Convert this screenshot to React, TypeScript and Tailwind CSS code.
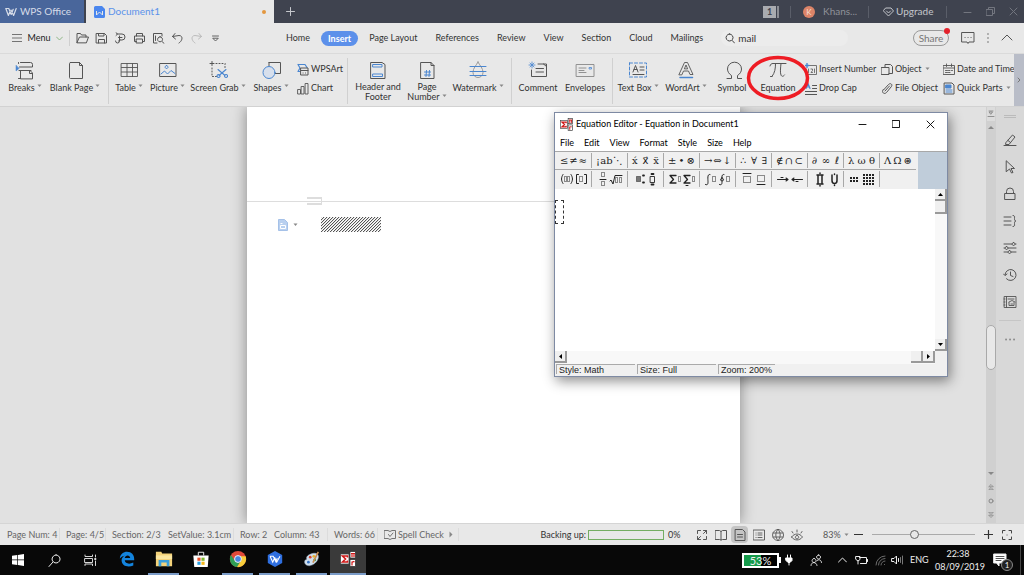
import type { ReactNode } from "react";

const BLUE = "#4a86d0";

function Svg({ w = 20, h = 20, children, className = "" }: { w?: number; h?: number; children: ReactNode; className?: string }) {
  return (
    <svg
      width={w}
      height={h}
      viewBox={`0 0 ${w} ${h}`}
      fill="none"
      stroke="currentColor"
      strokeLinecap="round"
      strokeLinejoin="round"
      className={`shrink-0 ${className}`}
      aria-hidden="true"
    >
      {children}
    </svg>
  );
}

function Caret({ className = "" }: { className?: string }) {
  return (
    <Svg w={5} h={4} className={className}>
      <path d="M.5 .5h4L2.500 3z" fill="#888" stroke="none" />
    </Svg>
  );
}

function Divider({ className = "h-3" }: { className?: string }) {
  return <span className={`w-px shrink-0 ${className}`} />;
}

function Equals({ size }: { size: number }) {
  return (
    <svg width={size} height={size} viewBox="0 0 16 16" className="shrink-0" aria-hidden="true">
      <rect x=".5" y="3" width="8.500" height="10" fill="#fff" stroke="#444" strokeWidth=".8" />
      <rect x="10" y=".5" width="5.500" height="6.500" fill="#fff" stroke="#333" strokeWidth=".8" />
      <rect x="10" y="8.500" width="5.500" height="7" fill="#fff" stroke="#333" strokeWidth=".8" />
      <path d="M7.500 6.500V5H2.500l3 3-3 3h5V9.500" fill="none" stroke="#d01818" strokeWidth="1.600" />
      <path d="M11 2.500h4M12 2.500v3.500M14 2.500v3.500M12 10.500v4M12 11.500c1-1 2-1 2.500-.4" fill="none" stroke="#d01818" strokeWidth="1.200" />
    </svg>
  );
}

/* ---------- title bar ---------- */

function TitleBar() {
  return (
    <header className="flex h-[23px] shrink-0 items-center bg-[#3f434f] text-[10px] text-[#b9bbc0]">
      <button className="flex h-full w-[84px] shrink-0 items-center gap-[3px] bg-[#49669b] pl-[5px] text-[#d6dce8]">
        <Svg w={12} h={10}>
          <path d="M.8 1.500h3l2.400 6 2-5.200M11.200 1.500 8.600 8.500 6 3M.8 1.500 3.400 8.500 5.200 4" strokeWidth="1.200" />
        </Svg>
        WPS Office
      </button>
      <div className="ml-[2px] flex h-full w-[188px] shrink-0 items-center bg-[#e8e8e8] pl-2 pr-2 text-[#5b92ea]">
        <svg width="11" height="12" viewBox="0 0 11 12" aria-hidden="true">
          <path d="M1.500 0H8l3 3v7.500A1.500 1.500 0 0 1 9.500 12h-8A1.500 1.500 0 0 1 0 10.500v-9A1.500 1.500 0 0 1 1.500 0z" fill="#4a86ee" />
          <path d="M2.500 5v4l3-3 3 3V5" fill="none" stroke="#e8e8e8" />
        </svg>
        <span className="ml-[3px]">Document1</span>
        <span className="ml-auto size-1 rounded-full bg-[#e3973f]" />
      </div>
      <button aria-label="New tab" className="ml-3 text-[#c5c7cc]">
        <Svg w={9} h={9}><path d="M4.500.500v8M.5 4.500h8" /></Svg>
      </button>
      <div className="ml-auto flex shrink-0 items-center">
        <span className="flex h-3 w-[13px] items-center justify-center bg-[#a9abb0] text-[9px] font-bold text-[#3f434f]">1</span>
        <span className="ml-px h-3 w-[2px] bg-[#8b8d94]" />
        <Divider className="ml-[11px] h-3 bg-[#5a5e69]" />
        <span className="ml-3 flex size-3 items-center justify-center rounded-full bg-[#dc8468] text-[8px] text-[#f3ddd4]">K</span>
        <button className="ml-2 w-[45px] text-left text-[#8f9299]">Khans...</button>
        <Divider className="h-3 bg-[#5a5e69]" />
        <button className="ml-[14px] flex w-[63px] items-center gap-[2px] text-[#c5c7cc]">
          <Svg w={11} h={10}><path d="M3 1h5l2.500 3-5 5-5-5zM3.500 4l2 2 2-2" /></Svg>
          Upgrade
        </button>
        <Divider className="h-3 bg-[#5a5e69]" />
        <button aria-label="Minimize" className="ml-4 text-[#73767f]"><Svg w={9} h={9}><path d="M1 5.500h7" /></Svg></button>
        <button aria-label="Restore" className="ml-[14px] text-[#73767f]"><Svg w={9} h={9}><path d="M.5 2.500h6v6h-6zM2.500 2.500v-2h6v6h-2" /></Svg></button>
        <button aria-label="Close" className="ml-[14px] mr-[6px] text-[#73767f]"><Svg w={9} h={9}><path d="m1 1 7 7M8 1 1 8" /></Svg></button>
      </div>
    </header>
  );
}

/* ---------- menu bar ---------- */

const QUICK_ACTIONS: { name: string; icon: ReactNode; dim?: boolean }[] = [
  { name: "Open", icon: <path d="M1 10.500v-9h3.500l1 1.500h4.500v2M1 10.500 3.500 5H12.500l-2 5.500z" /> },
  { name: "Save", icon: <path d="M1.500 1.500h8l2 2v7.500h-10zM3.500 1.500V4h5.500V1.500M3.500 11V7.500h6V11" /> },
  { name: "Output as PDF", icon: <path d="M3 2h5a2.500 2.500 0 0 1 0 6H6M5.500 4v5a2 2 0 0 1-4 0M2 3.500 3.500 2 2 .700M4.500 5.500h3.500M6 8l-1.500 1" /> },
  { name: "Print", icon: <path d="M3.500 4V1.500h6V4M3.500 9.500h-2V4h10v5.500h-2M3.500 7h6v4h-6z" /> },
  { name: "Print Preview", icon: <path d="M5 11H1.500v-9.500H10V4M10 9.500l2 1.800M8 4.800a2.500 2.500 0 1 0 .1 0zM3.500 4v4.500" /> },
  { name: "Undo", icon: <path d="M4 1.500 1.500 4.500l3 2.500M1.500 4.500 8 3.500c4 0 4 5 0 7.500" /> },
  { name: "Redo", icon: <path d="m9 1.500 2.500 3-3 2.500M11.500 4.500 5 3.500c-4 0-4 5 0 7.500" />, dim: true },
  { name: "Customize", icon: <path d="M3.500 4h6M4 6.500l2.500 2.500L9 6.500z" strokeWidth=".9" /> },
];

const TABS = ["Home", "Insert", "Page Layout", "References", "Review", "View", "Section", "Cloud", "Mailings"];

function MenuBar() {
  return (
    <div className="flex h-[31px] shrink-0 items-center border-b border-[#dadada] bg-[#e8e8e8] text-[#333]">
      <div className="flex w-[286px] shrink-0 items-center">
        <button className="ml-3 flex items-center gap-[5px] text-[#222]">
          <Svg w={10} h={8} className="text-[#666]"><path d="M0 .5h10M0 4h10M0 7.500h10" strokeWidth=".9" /></Svg>
          <span className="w-[24px]">Menu</span>
          <Svg w={7} h={5} className="text-[#84b07c]"><path d="M.5 1l3 3 3-3" strokeWidth=".9" /></Svg>
        </button>
        <Divider className="ml-[6px] h-4 bg-[#cfcfcf]" />
        <div className="ml-[3px] flex">
          {QUICK_ACTIONS.map(({ name, icon, dim }) => (
            <button key={name} aria-label={name} className={`flex w-[19px] justify-center ${dim ? "text-[#bbb]" : "text-[#555]"}`}>
              <Svg w={13} h={12}>{icon}</Svg>
            </button>
          ))}
        </div>
      </div>
      <nav className="flex shrink-0 items-center gap-[18px]">
        {TABS.map((tab) => (
          <button
            key={tab}
            className={tab === "Insert" ? "-mx-[7px] h-[15px] rounded-full bg-[#5c90ea] px-[7px] font-bold leading-[15px] text-white" : ""}
          >
            {tab}
          </button>
        ))}
      </nav>
      <label className="ml-[18px] flex h-4 w-[127px] items-center gap-[3px] rounded-full bg-[#ececec] pl-1">
        <Svg w={10} h={11} className="text-[#444]"><path d="M4.500 1a3.500 3.500 0 1 0 .1 0zM7.200 7.500l2.300 2.500" /></Svg>
        <input aria-label="Search" defaultValue="mail" className="w-full min-w-0 bg-transparent text-[10px] text-[#333] outline-none" />
      </label>
      <div className="ml-auto flex shrink-0 items-center text-[#555]">
        <button className="relative h-4 w-9 rounded-full border border-[#999] text-[10px] leading-[13px] text-[#777]">
          Share
          <span className="absolute -right-[2px] -top-[3px] size-[6px] rounded-full bg-[#e3222c]" />
        </button>
        <button aria-label="Feedback" className="ml-3"><Svg w={14} h={14}><path d="M1 1.500h12v9.500H8l-1 1.500L6 11H1zM4 6.500h.1M7 6.500h.1M10 6.500h.1" /></Svg></button>
        <button aria-label="More" className="ml-3"><Svg w={2} h={12}><path d="M1 2v.1M1 6v.1M1 10v.1" strokeWidth="1.400" /></Svg></button>
        <button aria-label="Collapse ribbon" className="ml-3 mr-[11px]"><Svg w={12} h={8}><path d="m1 6 5-5 5 5" /></Svg></button>
      </div>
    </div>
  );
}

/* ---------- ribbon ---------- */

type Tool = { label: string; width: string; icon: ReactNode; caret?: boolean; second?: string };

function RibbonButton({ label, width, icon, caret, second }: Tool) {
  return (
    <button className={`flex h-full shrink-0 flex-col items-center pt-[6px] ${width}`}>
      <Svg className="text-[#555]">{icon}</Svg>
      <span className={`mt-[2px] flex whitespace-nowrap ${second ? "leading-[10px]" : "leading-3"}`}>
        {label}
        {caret && !second && <Caret className="ml-[2px] mt-[2px]" />}
      </span>
      {second && (
        <span className="flex whitespace-nowrap leading-[10px]">
          {second}
          {caret && <Caret className="ml-[2px] mt-[2px]" />}
        </span>
      )}
    </button>
  );
}

const PAGE_TOOLS: Tool[] = [
  { label: "Breaks", width: "w-[50px]", caret: true, icon: <><path d="M5.500 2.500h10a2 2 0 0 1 2 2V7H4.500M5.500 18.500V10.500H15l2.500 2.500v5.500zM4 10.500h12M14.500 10.500v3h3M3.500 2.500v1M3.500 18.500h2" /><path d="M1 5.500v5.500l3-2.500z" fill={BLUE} stroke={BLUE} strokeWidth=".5" /></> },
  { label: "Blank Page", width: "w-[50px]", caret: true, icon: <path d="M5.500 2.500h9l3 3v13h-12a1 1 0 0 1-1-1v-14a1 1 0 0 1 1-1zM14.500 2.500v3h3" /> },
];
const OBJECT_TOOLS: Tool[] = [
  { label: "Table", width: "w-[40px]", caret: true, icon: <path d="M2.500 3.500h16v13h-16zM2.500 7.500h16M2.500 12h16M8 3.500v13M13.500 3.500v13" strokeWidth=".9" /> },
  { label: "Picture", width: "w-[37px]", caret: true, icon: <><rect x="2" y="3.500" width="16" height="13" /><path d="m3 14 3.500-3 3 3 3.500-3.500 4 3M8.500 5.500a1.500 1.500 0 1 0 .1 0z" stroke={BLUE} /></> },
  { label: "Screen Grab", width: "w-[64px]", caret: true, icon: <><path d="M2 3.500h4M4 1.500v4" /><path d="M8 3.500h9v4M4 8v8.500h5" strokeDasharray="1 2" /><path d="m10 9.500 7 6M18 9.500l-7 6M10.500 14.500a1.500 1.500 0 1 0 .1 0zM18 14.500a1.500 1.500 0 1 0 .1 0z" stroke={BLUE} strokeWidth="1.100" /></> },
  { label: "Shapes", width: "w-[42px]", caret: true, icon: <><path d="M8 2.500H19.500v11H14M8 2.500V6" /><circle cx="8" cy="12.500" r="6" fill="#d7dfec" stroke={BLUE} /></> },
];
const HEADER_TOOLS: Tool[] = [
  { label: "Header and", second: "Footer", width: "w-[52px]", icon: <><path d="M3 2.500h11l3 2v14H3z" /><path d="M5 4.500h9v2.500H5zM5 14h9.500v2.500H5z" stroke={BLUE} /></> },
  { label: "Page", second: "Number", caret: true, width: "w-[46px]", icon: <><path d="M4 2.500h10l3 3v13H4zM14 2.500v3h3" /><path d="M7.500 12h6M7.500 15h6M9.500 10.500l-.5 6M12.500 10.500l-.5 6" stroke={BLUE} /></> },
  { label: "Watermark", caret: true, width: "w-[56px]", icon: <><path d="M10 2c2 4 5 6 5 10.500a5 5 0 0 1-10 0C5 8 8 6 10 2z" stroke="#999" /><path d="M2 6.500h16M2 11.500h16M2 15.500h16" stroke={BLUE} /></> },
];
const COMMENT_TOOLS: Tool[] = [
  { label: "Comment", width: "w-[48px]", icon: <><path d="M10 4h8.500v12.500h-15V10M8 8.500h7.500M8 12h7.500M15.500 4l3 2.500" /><path d="M4 2v6M1 5h6M2 3l4 4M6 3 2 7" stroke={BLUE} strokeWidth=".8" /></> },
  { label: "Envelopes", width: "w-[46px]", icon: <><path d="M1.500 4.500h17.500v12H1.500zM4 8h7M4 10.500h5M4 12.500h7" stroke="#888" strokeWidth=".9" /><path d="M14.500 7.500h2v1.500h-2z" stroke={BLUE} strokeWidth=".8" /></> },
];
const TEXT_TOOLS: Tool[] = [
  { label: "Text Box", width: "w-[50px]", caret: true, icon: <><rect x="1.500" y="3" width="17" height="14" stroke={BLUE} strokeDasharray="3 2" /><path d="m5 12 2.500-6.500L10 12M6 9.500h3M12 7h4M12 10h4M5 14.500h11" /></> },
  { label: "WordArt", width: "w-[46px]", caret: true, icon: <><path d="M3 14.500 8.500 2.500h3l5.500 12h-3L12.500 11h-5L6 14.500zM8.500 8.500 10 5l1.500 3.500z" strokeWidth=".9" /><path d="M4 17.500h12.500" stroke={BLUE} strokeWidth="1.500" /></> },
  { label: "Symbol", width: "w-[46px]", icon: <path d="M5 18.500h4.500V15.500C7 14 5.500 11.500 5.500 9a7 6.800 0 0 1 14 0c0 2.500-1.500 5-4 6.500v3H20" /> },
];

function SmallTool({ label, icon, caret }: { label: string; icon: ReactNode; caret?: boolean }) {
  return (
    <button className="flex h-[14px] items-center gap-[2px] whitespace-nowrap">
      <Svg w={12} h={13} className="text-[#555]">{icon}</Svg>
      {label}
      {caret && <Caret className="ml-px" />}
    </button>
  );
}

function ToolColumn({ children, width }: { children: ReactNode; width: string }) {
  return <div className={`flex shrink-0 flex-col gap-[5px] pt-2 ${width}`}>{children}</div>;
}

function Ribbon() {
  const line = "mt-1 h-[46px] bg-[#d0d0d0]";
  return (
    <div className="flex h-[53px] shrink-0 border-b border-[#d2d2d2] bg-[#e8e8e8] text-[#333]">
      <div className="flex w-[108px] shrink-0">{PAGE_TOOLS.map((t) => <RibbonButton key={t.label} {...t} />)}</div>
      <Divider className={line} />
      <div className="flex shrink-0">
        {OBJECT_TOOLS.map((t) => <RibbonButton key={t.label} {...t} />)}
        <div className="pl-[5px]">
          <ToolColumn width="w-[50px]">
            <SmallTool label="WPSArt" icon={<><path d="M1 1.500h7l2 3M1 1.500 3 5l-2 3.500h2" stroke={BLUE} strokeWidth="1.200" /><path d="M4 5h7v7H4zM4 7.500h7M6 10h.1M8.500 10h.1" /></>} />
            <SmallTool label="Chart" icon={<path d="M1 7.500h2.500V12H1zM4.500 4.500H7V12H4.500zM8.500 1.500H11V12H8.500z" strokeWidth=".9" />} />
          </ToolColumn>
        </div>
      </div>
      <Divider className={line} />
      <div className="flex w-[163px] shrink-0 pl-1">{HEADER_TOOLS.map((t) => <RibbonButton key={t.label} {...t} />)}</div>
      <Divider className={line} />
      <div className="flex w-[100px] shrink-0 pl-[2px]">{COMMENT_TOOLS.map((t) => <RibbonButton key={t.label} {...t} />)}</div>
      <Divider className={line} />
      <div className="flex shrink-0">
        {TEXT_TOOLS.map((t) => <RibbonButton key={t.label} {...t} />)}
        <div className="relative z-10">
          <RibbonButton
            label="Equation"
            width="w-[46px]"
            icon={<path d="M2 6c.5-2 1.500-2.500 3-2.500h13M7.500 3.500c0 5-.5 9-3.500 13M13 3.500c-.5 5-1 9 0 11.500.8 2 2.500 1.500 3.500 0M2.500 16.500H4" />}
          />
          <svg width="64" height="46" viewBox="0 0 64 46" className="pointer-events-none absolute -left-[9px] top-px" aria-hidden="true">
            <ellipse cx="32" cy="23" rx="29.500" ry="20.500" fill="none" stroke="#ee1c24" strokeWidth="3.500" />
          </svg>
        </div>
      </div>
      <div className="flex pl-1">
        <ToolColumn width="w-[76px]">
          <SmallTool label="Insert Number" icon={<><path d="M4 2.500h7.500v9H1V6M3.500 6v3.500M6 6h1.500v1.500L6 9.500h1.500M9.500 6v3.500" strokeWidth=".8" /><path d="M2 .5v4M0 2.500h4" stroke={BLUE} strokeWidth="1.400" /></>} />
          <SmallTool label="Drop Cap" icon={<><path d="M7.500 3.500H12M7.500 6.500H12M0 9.500h12M0 12.500h12" /><path d="m1 6.500 2-5 2 5M2 5h2" stroke={BLUE} strokeWidth="1.200" /></>} />
        </ToolColumn>
        <ToolColumn width="w-[62px]">
          <SmallTool label="Object" caret icon={<path d="M4 4V1.500h5.500l2 2v7H8M.5 4.500H8v7H.5z" />} />
          <SmallTool label="File Object" icon={<path d="m2.500 8 5-5.500c2-2 4.500 0 2.800 2.200L5.500 10.500c-2.500 2.500-5.500-.5-3.300-3M4 9l4.500-5" />} />
        </ToolColumn>
        <ToolColumn width="w-[70px]">
          <SmallTool label="Date and Time" icon={<path d="M.5 2.500h11v9H.5zM.5 5h11M3.500 1v2.500M8.500 1v2.500M2.500 7.500h2M5.500 7.500h1.500M8.500 7.500h1M2.500 9.500h2M5.500 9.500h1.500" strokeWidth=".9" />} />
          <SmallTool label="Quick Parts" caret icon={<><path d="M1.500 1h7.500l2 2v9H1.500z" /><path d="M3 3h5v3H3z" fill={BLUE} stroke={BLUE} /><path d="M3 8h6M3 10h6" stroke={BLUE} /></>} />
        </ToolColumn>
      </div>
      <button aria-label="Scroll ribbon" className="ml-auto flex w-[10px] shrink-0 items-center justify-center bg-[#b9bdc8] text-[#777]">
        <Svg w={4} h={6}><path d="m1 1 2 2-2 2" /></Svg>
      </button>
    </div>
  );
}

/* ---------- equation editor ---------- */

const SYMBOLS = ["≤ ≠ ≈", "¡ ab ⋱", "x́ x⃗ ẍ", "± • ⊗", "→ ⇔ ↓", "∴ ∀ ∃", "∉ ∩ ⊂", "∂ ∞ ℓ", "λ ω θ", "Λ Ω ⊛"];

const slot = (x: number, y: number, w = 4, h = 5) => (
  <rect x={x + 0.5} y={y + 0.5} width={w} height={h} strokeDasharray="1 1" strokeWidth="1" strokeLinecap="butt" />
);

const TEMPLATES: { name: string; icon: ReactNode }[] = [
  { name: "Fences", icon: <><path d="M3 2.500c-2 3-2 6 0 9M11 2.500c2 3 2 6 0 9M18.500 2.500h-2v9h2M24.500 2.500h2v9h-2" />{slot(4, 4, 2)}{slot(7, 4, 2)}{slot(19, 4, 3)}</> },
  { name: "Fractions and radicals", icon: <>{slot(5, 0, 3, 4)}{slot(5, 9, 3, 4)}<path d="M4 7.500h6M14 9l1-1 2 4L19 3.500h7" />{slot(19, 5, 2)}{slot(23, 5, 2)}</> },
  { name: "Scripts", icon: <><rect x="4.500" y="4.500" width="4" height="5" fill="#777" strokeDasharray="1 1" strokeLinecap="butt" /><path d="M11 3.500h1M11 10.500h1M19.500 2h2M19.500 12.500h2" strokeWidth="1.800" /><rect x="18.500" y="4.500" width="4" height="6" strokeWidth=".9" /></> },
  { name: "Summations", icon: <><path d="M8 3.500H2l3.500 4L2 11h6M22 3.500h-6l3.500 4L16 11h6" strokeWidth="1.300" />{slot(10, 4, 2)}{slot(24, 4, 2)}<path d="M18 13.500h2" /></> },
  { name: "Integrals", icon: <><path d="M6 2.500c-3-1-2 5-2 7s0 4-2.500 3M20 2.500c-3-1-2 5-2 7s0 4-2.500 3M18 6a1.500 1.500 0 1 0 .1 0z" />{slot(8, 4, 3)}{slot(22, 4, 3)}</> },
  { name: "Bars", icon: <><path d="M3 1.500h8M17 12.500h8" />{slot(3, 4, 7, 6)}{slot(17, 3, 7, 6)}</> },
  { name: "Arrows", icon: <path d="M1.500 7.500H12M10 6l2 1.500L10 9M5 5.500h2M16 7.500h10.500M18 6l-2 1.500L18 9M20 9.500h2" strokeWidth="1.100" /> },
  { name: "Products", icon: <><path d="M5 3h6M6 3v8.500M10 3v8.500M5 12h6M20 3v5.500c0 4 5 4 5 0V3" strokeWidth="1.500" /><path d="M8 1v.5M8 14v-.5M22.500 2v.5M22.500 13v.5" strokeWidth="1.500" /></> },
  { name: "Matrices", icon: <><path d="M2 6h8M2 9h8" strokeWidth="2" strokeDasharray="2 1" strokeLinecap="butt" /><path d="M15 3h11M15 6h11M15 9h11M15 12h11" strokeWidth="2" strokeDasharray="2 1" strokeLinecap="butt" /></> },
];

function ScrollArrow({ name, d }: { name: string; d: string }) {
  return (
    <button aria-label={name} className="flex h-3 w-3 shrink-0 items-center justify-center border-b-2 border-r-2 border-[#9a9a9a] bg-[#f0f0f0] text-black">
      <Svg w={5} h={5}><path d={d} fill="currentColor" stroke="none" /></Svg>
    </button>
  );
}

function EquationEditor() {
  return (
    <section className="absolute left-[554px] top-[5px] flex h-[265px] w-[394px] flex-col border border-[#7e8aa3] bg-white text-black shadow-[2px_4px_12px_rgba(0,0,0,0.45)]">
      <div className="flex h-[22px] shrink-0 items-center pl-[5px] pr-3">
        <Equals size={13} />
        <span className="ml-[3px]">Equation Editor - Equation in Document1</span>
        <div className="ml-auto flex gap-[25px]">
          <button aria-label="Minimize editor"><Svg w={9} h={9}><path d="M1 4.500h7" strokeWidth=".9" /></Svg></button>
          <button aria-label="Maximize editor"><Svg w={9} h={9}><path d="M.5.500h7v7h-7z" strokeWidth=".9" /></Svg></button>
          <button aria-label="Close editor"><Svg w={9} h={9}><path d="m1 1 7 7M8 1 1 8" strokeWidth=".9" /></Svg></button>
        </div>
      </div>
      <nav className="flex h-4 shrink-0 items-center gap-[10px] pl-[5px]">
        {["File", "Edit", "View", "Format", "Style", "Size", "Help"].map((m) => <button key={m}>{m}</button>)}
      </nav>
      <div className="flex h-[38px] shrink-0 border-t border-[#a8a8a8] bg-[#c0cdda]">
        <div className="w-[363px] bg-[#f0f0f0] text-[#222]">
          <div className="mr-[2px] flex h-[18px] border-b border-[#a8a8a8] pl-[1px] pt-px">
            {SYMBOLS.map((s, i) => (
              <button
                key={s}
                className={`flex h-[15px] w-9 items-center justify-between px-1 font-['DejaVu_Serif','DejaVu_Sans',serif] text-[10px] leading-none ${i < SYMBOLS.length - 1 ? "border-r border-[#a8a8a8]" : ""}`}
              >
                {s.split(" ").map((c) => <span key={c}>{c}</span>)}
              </button>
            ))}
          </div>
          <div className="flex h-[18px] pl-[1px] pt-px">
            {TEMPLATES.map(({ name, icon }) => (
              <button key={name} aria-label={name} className="flex h-4 w-9 items-center justify-center border-r border-[#a8a8a8]">
                <Svg w={28} h={15}>{icon}</Svg>
              </button>
            ))}
          </div>
        </div>
      </div>
      <div className="flex min-h-0 flex-1">
        <div className="flex-1 pt-[11px]">
          <div className="h-6 w-[9px] border border-dashed border-[#333]" />
        </div>
        <div className="flex w-3 flex-col bg-[#f8f8f8]">
          <ScrollArrow name="Scroll up" d="M0 4h5L2.500 1z" />
          <span className="h-[13px] border-b-2 border-r-2 border-[#9a9a9a] bg-[#f0f0f0]" />
          <span className="flex-1" />
          <ScrollArrow name="Scroll down" d="M0 1h5L2.500 4z" />
        </div>
      </div>
      <div className="flex h-[13px] shrink-0 bg-[#f8f8f8]">
        <ScrollArrow name="Scroll left" d="M4 0v5L1 2.500z" />
        <span className="flex-1" />
        <span className="h-3 w-3 border-b-2 border-r-2 border-[#9a9a9a] bg-[#f0f0f0]" />
        <ScrollArrow name="Scroll right" d="M1 0v5l3-2.500z" />
        <span className="w-3 bg-[#f0f0f0]" />
      </div>
      <footer className="flex h-3 shrink-0 gap-[2px] bg-[#f0f0f0] pl-px font-['Liberation_Sans',Arial,sans-serif] leading-[10px] text-[#222]">
        <span className="h-[10px] w-[79px] border-l border-t border-[#aaa] pl-[2px]">Style: Math</span>
        <span className="h-[10px] w-[79px] border-l border-t border-[#aaa] pl-[2px]">Size: Full</span>
        <span className="h-[10px] w-[57px] border-l border-t border-[#aaa] pl-[2px]">Zoom: 200%</span>
      </footer>
    </section>
  );
}

/* ---------- document area ---------- */

const SIDE_TOOLS: { name: string; icon: ReactNode }[] = [
  { name: "Highlighter", icon: <path d="M1 12.500h12M3 9.500 9.500 2l2.500 2-6 7.500H3zM5 7.500l2.500 2" /> },
  { name: "Select", icon: <path d="m3.500 1 8 7.500H8l2 4-1.500.5-2-4-3 2.500z" /> },
  { name: "Protect", icon: <path d="M2 6.500h10v6H2zM3.500 6.500V4.500a3.500 3.500 0 0 1 7 0v2" /> },
  { name: "Styles", icon: <path d="M1 3h7M1 7h7M1 11h7M10 1.500c2 0 1.500 1 1.500 3S12 7 13 7c-1 0-1.500.5-1.500 2.500s.5 3-1.500 3" /> },
  { name: "Settings", icon: <path d="M1 3h8M12 3h1M1 7h1M5 7h8M1 11h4M8 11h5M10.500 1.500a1.500 1.500 0 1 0 .1 0zM3.500 5.500a1.500 1.500 0 1 0 .1 0zM6.500 9.500a1.500 1.500 0 1 0 .1 0z" /> },
  { name: "History", icon: <path d="M2 7a5.500 5.500 0 1 1 1.500 3.800M.5 6l1.500 1.500L4 6M7.500 4v3.500l2.500 1" /> },
  { name: "Templates", icon: <path d="M1.500 1.500H13v11H1.500zM3.500 1.500v11M1 4h1M1 7h1M1 10h1M5 4h6M6 7l3-1.500L12 7M6 7.500v3h5v-3M8 9h1.500" strokeWidth=".9" /> },
];

function SidePane() {
  return (
    <aside className="flex w-7 shrink-0 flex-col items-center bg-[#d8d8d8] pt-2 text-[#555]">
      <span className="mb-[15px] h-[3px] w-3 border-y border-[#bbb]" />
      <div className="flex flex-col gap-[13px]">
        {SIDE_TOOLS.map(({ name, icon }) => (
          <button key={name} aria-label={name}><Svg w={14} h={14}>{icon}</Svg></button>
        ))}
      </div>
      <span className="mt-[11px] h-px w-[22px] bg-[#c6c6c6]" />
      <button aria-label="More panes" className="mt-[17px] text-[#888]">
        <Svg w={12} h={3}><path d="M2 1.500h.1M6 1.500h.1M10 1.500h.1" strokeWidth="1.800" /></Svg>
      </button>
    </aside>
  );
}

function VerticalScroll() {
  return (
    <div className="flex w-[10px] shrink-0 flex-col items-center bg-[#d0d0d0] text-[#888]">
      <Svg w={8} h={14} className="bg-[#dcdcdc]"><path d="M2 4h4M2.500 5h3L4 7zM1 9.500h6" strokeWidth=".9" /></Svg>
      <Svg w={6} h={5} className="mt-1"><path d="M0 4h6L3 1z" fill="currentColor" stroke="none" /></Svg>
      <span className="mt-[195px] h-[45px] w-[10px] shrink-0 rounded-full border border-[#a9a9a9] bg-[#e8e8e8]" />
      <div className="mt-auto flex flex-col items-center gap-2 pb-[5px]">
        <Svg w={6} h={5}><path d="M0 1h6L3 4z" fill="currentColor" stroke="none" /></Svg>
        <Svg w={6} h={6}><path d="m1 2.500 2-2 2 2zM1 5.500l2-2 2 2z" strokeWidth=".8" /></Svg>
        <Svg w={6} h={6}><circle cx="3" cy="3" r="2" /></Svg>
        <Svg w={6} h={6}><path d="m1 .5 2 2 2-2zM1 3.500l2 2 2-2z" strokeWidth=".8" /></Svg>
      </div>
    </div>
  );
}

function Workspace() {
  return (
    <main className="relative flex min-h-0 flex-1 overflow-hidden bg-[#e1e1e1]">
      <div className="flex min-w-0 flex-1 justify-center">
        <div className="flex w-1/2 flex-col shadow-[0_0_14px_rgba(0,0,0,0.4)]">
          <article className="flex h-[94px] flex-col items-start justify-end bg-white">
            <span className="ml-[60px] h-1 w-[15px] border-r border-t-2 border-[#ddd]" />
          </article>
          <article className="flex-1 border-t border-[#ddd] bg-white">
            <span className="ml-[60px] block h-[3px] w-[15px] border-b-2 border-r border-[#ddd]" />
            <div className="ml-[31px] mt-3 flex items-center">
              <svg width="10" height="12" viewBox="0 0 10 12" aria-hidden="true">
                <path d="M.5.500h6l3 3v8h-9z" fill="#b9d0ef" stroke="#a5c1e8" />
                <path d="M2.500 4.500h2M2.500 6.500h5v3h-5z" fill="none" stroke="#fff" />
              </svg>
              <Caret className="ml-[5px]" />
              <svg width="60" height="15" className="ml-[23px]" shapeRendering="crispEdges" aria-hidden="true">
                <defs>
                  <pattern id="hatch" width="3" height="3" patternUnits="userSpaceOnUse">
                    <path d="M2 0h1v1H2zM1 1h1v1H1zM0 2h1v1H0z" fill="#555" />
                    <path d="M0 0h1v1H0zM2 1h1v1H2zM1 2h1v1H1z" fill="#ddd" />
                  </pattern>
                </defs>
                <rect width="60" height="15" fill="url(#hatch)" />
              </svg>
            </div>
          </article>
        </div>
      </div>
      <VerticalScroll />
      <SidePane />
      <EquationEditor />
    </main>
  );
}

/* ---------- status bar ---------- */

const VIEWS: { name: string; icon: ReactNode; active?: boolean }[] = [
  { name: "Full Screen", icon: <path d="M1.500 4.500v-3h3M7.500 1.500h3v3M10.500 7.500v3h-3M4.500 10.500h-3v-3M7.500 4.500l3-3M4.500 7.500l-3 3" /> },
  { name: "Reading", icon: <path d="M.5 1.500h4L6 2.500l1.500-1h4v9h-4L6 11l-1.500-.5h-4zM6 2.500V11" /> },
  { name: "Print Layout", icon: <path d="M1.500.500h7l2.500 2.500v8.500h-9.500zM3.500 5.500h5M3.500 8h5" />, active: true },
  { name: "Outline", icon: <path d="M.5 1h11v10H.5zM3 4h.1M5 4h4M3 6h.1M5 6h4M3 8.500h.1M5 8.500h4" strokeWidth=".9" /> },
  { name: "Web Layout", icon: <path d="M6 .5a5.500 5.500 0 1 0 .1 0zM6 .5c-3 3-3 8 0 11M6 .5c3 3 3 8 0 11M1 4h10M1 8h10" strokeWidth=".9" /> },
  { name: "Eye Protection", icon: <path d="M.5 8c3-4 8-4 11 0-3 4-8 4-11 0zM6 6.500a1.700 1.700 0 1 0 .1 0zM2 4 1 2.500M6 3V1M10 4l1-1.500" strokeWidth=".9" /> },
];

function StatusBar() {
  return (
    <footer className="flex h-[22px] shrink-0 items-center whitespace-nowrap border-t border-[#d5d5d5] bg-[#e8e8e8] text-[#666]">
      <span className="w-[59px] shrink-0 pl-[7px]">Page Num: 4</span>
      <span className="w-[46px] shrink-0 border-l border-[#dcdcdc] pl-[6px]">Page: 4/5</span>
      <span className="w-[57px] shrink-0 border-l border-[#dcdcdc] pl-[6px]">Section: 2/3</span>
      <span className="w-[71px] shrink-0 pl-[6px]">SetValue: 3.1cm</span>
      <span className="w-[36px] shrink-0 border-l border-[#dcdcdc] pl-[6px]">Row: 2</span>
      <span className="w-[58px] shrink-0 pl-[5px]">Column: 43</span>
      <span className="w-[50px] shrink-0 border-l border-[#dcdcdc] pl-[6px]">Words: 66</span>
      <button className="flex w-[82px] shrink-0 items-center gap-[2px] border-x border-[#dcdcdc] pl-[6px]">
        <Svg w={12} h={11}><path d="M.5 1.500H4L6 2.500l2-1h3.500v8H8l-2 1-2-1H.5zM4.500 5.500l1.500 2L9 4" strokeWidth=".9" /></Svg>
        <span className="w-[47px] text-left">Spell Check</span>
        <Svg w={4} h={7} className="ml-[2px]"><path d="M.5.500v6l3-3z" fill="#888" stroke="none" /></Svg>
      </button>
      <div className="ml-auto flex shrink-0 items-center text-[#333]">
        <span>Backing up:</span>
        <span className="ml-[2px] mr-1 h-[10px] w-[76px] border border-[#74ad62]" />
        <span className="w-[25px]">0%</span>
        <div className="flex w-[116px] text-[#555]">
          {VIEWS.map(({ name, icon, active }) => (
            <button key={name} aria-label={name} className={`mr-[2px] flex h-[17px] w-[17px] shrink-0 items-center justify-center rounded-sm ${active ? "bg-[#c4c4c4]" : ""}`}>
              <Svg w={12} h={12}>{icon}</Svg>
            </button>
          ))}
        </div>
        <button className="ml-[14px] flex w-[31px] items-center gap-[3px] text-[#555]">83% <Caret /></button>
        <button aria-label="Zoom out"><Svg w={9} h={9}><path d="M.5 4.500h8" strokeWidth="1.200" /></Svg></button>
        <input
          type="range"
          aria-label="Zoom"
          defaultValue={40}
          className="mx-[9px] h-px w-[103px] appearance-none bg-[#aaa] [&::-webkit-slider-thumb]:size-[9px] [&::-webkit-slider-thumb]:appearance-none [&::-webkit-slider-thumb]:rounded-full [&::-webkit-slider-thumb]:border [&::-webkit-slider-thumb]:border-[#666] [&::-webkit-slider-thumb]:bg-[#e8e8e8]"
        />
        <button aria-label="Zoom in"><Svg w={9} h={9}><path d="M.5 4.500h8M4.500.500v8" strokeWidth="1.200" /></Svg></button>
        <button aria-label="Fit page" className="ml-[9px] mr-3"><Svg w={10} h={10}><path d="M.5 3V.500H3M7 .5h2.500V3M9.500 7v2.500H7M3 9.500H.5V7M5 5h.1" strokeWidth=".9" /></Svg></button>
      </div>
    </footer>
  );
}

/* ---------- windows taskbar ---------- */

const PINNED: { name: string; icon: ReactNode; running?: boolean }[] = [
  {
    name: "Edge",
    icon: <path d="M2 9.500C2.500 4.500 6 2 10 2c5 0 8 3.500 8 8v1.500H7.500c.3 4 5.500 4.500 9.500 2.500v3.200c-5 2.500-13 1.300-13-5.700 0-2.500 1.500-4.500 4-5.500C5.500 6.500 3.500 7.500 2 9.500zM7.500 9h6c0-4-5.500-4-6 0z" fill="#1384de" stroke="none" />,
  },
  {
    name: "File Explorer",
    running: true,
    icon: <><path d="M1 2h6l1 2h11v14H1z" fill="#f3d27a" stroke="none" /><path d="M1 6h18v4H1z" fill="#fbe6a0" stroke="none" /><path d="M4 18v-7h12v7h-3v-4H7v4z" fill="#3a9fdb" stroke="none" /></>,
  },
  {
    name: "Store",
    icon: <><path d="M7 6V2.500h6V6" stroke="#fff" /><path d="M1.500 6h17l-1 13h-15z" fill="#fff" stroke="none" /><path d="M6 8.500h3.500v3.500H6z" fill="#e8502c" stroke="none" /><path d="M10.500 8.500H14v3.500h-3.500z" fill="#7db52f" stroke="none" /><path d="M6 13h3.500v3.500H6z" fill="#2a9fe0" stroke="none" /><path d="M10.500 13H14v3.500h-3.500z" fill="#f5b81c" stroke="none" /></>,
  },
  {
    name: "Chrome",
    running: true,
    icon: <><circle cx="10" cy="10" r="9" fill="#e04a3a" stroke="none" /><path d="M2.200 5.500A9 9 0 0 0 9 19L13.500 12 6.500 12z" fill="#2f9e54" stroke="none" /><path d="M18.500 7A9 9 0 0 1 9 19L13.800 11 12.500 7z" fill="#f7cd3b" stroke="none" /><circle cx="10" cy="10" r="3.800" fill="#4a86e0" stroke="#fff" /></>,
  },
  {
    name: "WPS",
    running: true,
    icon: <><path d="m10 1 8 4.500v9L10 19l-8-4.500v-9z" fill="#2f6fe0" stroke="none" /><path d="M4.500 7H8l3 6 1.500-4M15.500 7 12 13.500 9.500 8M4.500 7l3 6.500L9 10" stroke="#fff" strokeWidth="1.200" /></>,
  },
  {
    name: "Paint",
    running: true,
    icon: <><path d="M10 4c5-1.500 8 1 7 5s-5 8-10 8.500c-4 0-6-3-5-5.500.5-1.500 2.500-.5 2-2.500S6 5 10 4z" fill="#cfdfee" stroke="#9ab" strokeWidth=".5" /><circle cx="8" cy="8" r="1.500" fill="#d8432e" stroke="none" /><circle cx="12" cy="7" r="1.500" fill="#e7b42c" stroke="none" /><circle cx="13" cy="11" r="1.500" fill="#3a9b46" stroke="none" /><circle cx="6" cy="13.500" r="1.500" fill="#3470c0" stroke="none" /><path d="m11 14 6-12" stroke="#c88a50" strokeWidth="1.800" /></>,
  },
];

function Taskbar() {
  const system = "flex w-9 items-center justify-center text-[#eee]";
  return (
    <footer className="flex h-[30px] shrink-0 bg-[#080808] text-[#eee]">
      <button aria-label="Start" className={system}><Svg w={12} h={12}><path d="M0 1.700 5.300 1v4.600H0zM6 .900 12 0v5.600H6zM0 6.300h5.300V11L0 10.300zM6 6.300h6V12l-6-.9z" fill="#fff" stroke="none" /></Svg></button>
      <button aria-label="Search Windows" className={system}><Svg w={13} h={13}><path d="M8 1a4 4 0 1 0 .1 0zM5 8l-4 4.500" /></Svg></button>
      <button aria-label="Task View" className={system}><Svg w={13} h={12}><path d="M1 1v1.500h7.500V1M1 4.500h7.500v4H1zM1 11.500V10h7.500v1.500M11.500 1v2M11.500 7v4.500M11 4.500h1v1h-1z" strokeWidth=".9" /></Svg></button>
      {PINNED.map(({ name, icon, running }) => (
        <button key={name} aria-label={name} className="flex w-[37px] items-center justify-center px-[3px]">
          <span className={`flex h-full w-full items-center justify-center border-b-2 ${running ? "border-[#7b9cc8]" : "border-transparent"}`}>
            <svg width="18" height="18" viewBox="0 0 20 20" fill="none" aria-hidden="true">{icon}</svg>
          </span>
        </button>
      ))}
      <button aria-label="Equation Editor" className="flex w-[36px] items-center justify-center border-b-2 border-[#7b9cc8] bg-[#3a3a3a]">
        <Equals size={16} />
      </button>
      <div className="ml-auto flex shrink-0 items-center">
        <span className="flex h-[15px] w-[37px] items-center justify-center border-2 border-white bg-linear-to-r from-[#159a4a] from-53% to-black to-53% text-[11px] leading-none">53%</span>
        <span className="h-[6px] w-[2px] bg-white" />
        <Svg w={8} h={12} className="ml-1"><path d="M2.500 1v2.500M5.500 1v2.500M1 4h6v2.500L5 8.500H3L1 6.500zM4 8.500V11" fill="#fff" stroke="#fff" /></Svg>
        <button aria-label="People" className="ml-[17px]"><Svg w={12} h={12}><path d="M8.500 1a2 2 0 1 0 .1 0zM4 4.500a2 2 0 1 0 .1 0zM1 11.500c0-4 5.500-4 6 0M6.500 7c2-2.500 5-1 5 1.500" strokeWidth=".9" /></Svg></button>
        <button aria-label="Hidden icons" className="ml-4"><Svg w={9} h={6}><path d="m.5 5 4-4 4 4" /></Svg></button>
        <Svg w={13} h={10} className="ml-2"><path d="M4.500 2.500h7v6h-6M12.500 4.500v2M1 1.500h4v3L3 6 1 4.500zM3 6v3" /></Svg>
        <Svg w={11} h={11} className="ml-[7px] text-[#777]"><path d="M1 10a9 9 0 0 1 9-9M3.500 10A6.500 6.500 0 0 1 10 3.500M6 10a4 4 0 0 1 4-4M9.500 9.500h.1" strokeWidth=".9" /></Svg>
        <Svg w={13} h={10} className="ml-[5px]"><path d="M1 3.500h2L5.500 1v8L3 6.500H1zM7.500 3.500v3" /><path d="M9.500 2.500v5M11.500 1v8" stroke="#777" /></Svg>
        <span className="ml-[6px] w-[19px]">ENG</span>
        <time className="ml-[6px] w-[46px] whitespace-nowrap text-center leading-[13px]">22:38<br />08/09/2019</time>
        <button aria-label="Notifications" className="relative ml-3">
          <Svg w={14} h={14}><path d="M1 1h12v9H6v3L3.500 10H1z" fill="#fff" /><path d="M3 3.500h8M3 5.500h8M3 7.500h5" stroke="#555" /></Svg>
          <span className="absolute -bottom-[4px] -right-[6px] flex size-3 items-center justify-center rounded-full border border-[#888] bg-[#222] text-[8px] leading-none">1</span>
        </button>
        <Divider className="ml-[13px] mr-[3px] h-[30px] bg-[#444]" />
      </div>
    </footer>
  );
}

export default function App() {
  return (
    <div className="flex h-screen flex-col overflow-hidden font-[Lato,'Open_Sans',sans-serif] text-[9px]">
      <TitleBar />
      <MenuBar />
      <Ribbon />
      <Workspace />
      <StatusBar />
      <Taskbar />
    </div>
  );
}
